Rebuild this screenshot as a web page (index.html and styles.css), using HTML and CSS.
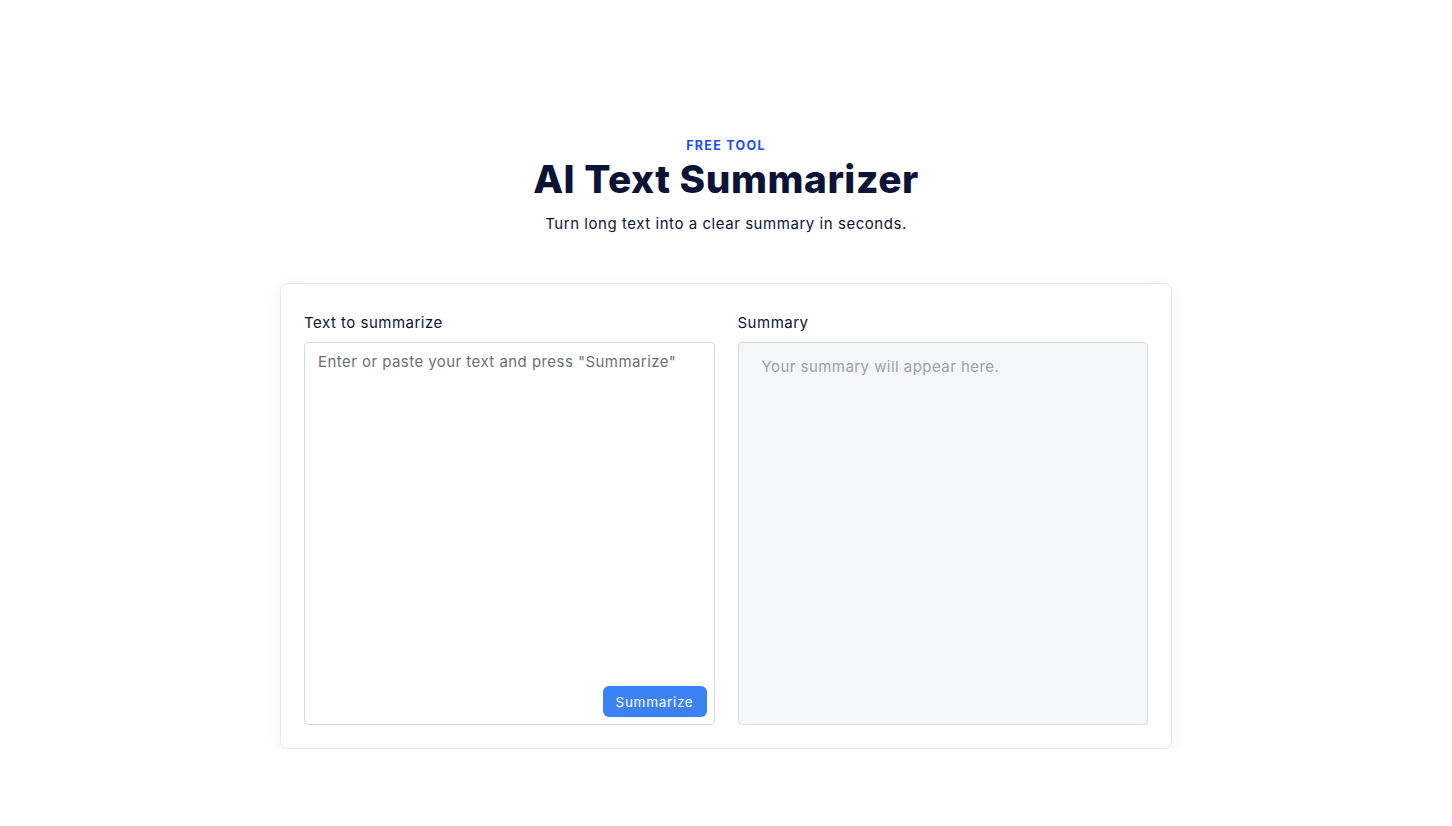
FILE: index.html
```html
<!DOCTYPE html>
<html lang="en">
<head>
<meta charset="utf-8">
<title>AI Text Summarizer</title>
<link rel="stylesheet" href="styles.css">
</head>
<body>
<main class="page">
  <header class="hero">
    <div class="eyebrow">FREE TOOL</div>
    <h1 class="title">AI Text Summarizer</h1>
    <p class="subtitle">Turn long text into a clear summary in seconds.</p>
  </header>
  <section class="card">
    <div class="col">
      <label class="label" for="src">Text to summarize</label>
      <div class="input-wrap">
        <textarea id="src" class="input" placeholder="Enter or paste your text and press &quot;Summarize&quot;"></textarea>
        <button class="btn" type="button">Summarize</button>
      </div>
    </div>
    <div class="col">
      <div class="label">Summary</div>
      <div class="output">Your summary will appear here.</div>
    </div>
  </section>
</main>
</body>
</html>
```
FILE: styles.css
```css
* { box-sizing: border-box; }
html, body { margin: 0; padding: 0; background: #ffffff; }
body {
  font-family: Inter, "Open Sans", "Liberation Sans", sans-serif;
  color: #0b1437;
}
.page {
  display: flex;
  flex-direction: column;
  align-items: center;
  padding-top: 138px;
}
.hero { text-align: center; }
.eyebrow {
  color: #1d4ef5;
  font-size: 12.5px;
  font-weight: 700;
  letter-spacing: 1.3px;
  line-height: 16px;
}
.title {
  margin: 2px 0 0;
  font-size: 38.8px;
  font-weight: 800;
  line-height: 46px;
  letter-spacing: 0.55px;
  color: #0b1437;
}
.subtitle {
  margin: 12px 0 0;
  font-size: 15px;
  line-height: 20px;
  letter-spacing: 0.55px;
  color: #0b1437;
}
.card {
  margin-top: 49px;
  width: 892px;
  height: 466px;
  border: 1px solid #e6e8eb;
  border-radius: 8px;
  box-shadow: 0 4px 18px rgba(15, 23, 42, 0.05);
  padding: 29px 23px 23px;
  display: grid;
  grid-template-columns: 1fr 1fr;
  gap: 23px;
}
.col { display: flex; flex-direction: column; }
.label {
  font-size: 15px;
  line-height: 20px;
  letter-spacing: 0.5px;
  color: #0b1437;
  margin-bottom: 9px;
}
.input-wrap {
  position: relative;
  flex: 1;
  display: flex;
}
.input {
  flex: 1;
  resize: none;
  border: 1.5px solid #d5d9e0;
  border-radius: 4px;
  padding: 8px 13px;
  font-family: inherit;
  font-size: 15px;
  line-height: 22px;
  letter-spacing: 0.45px;
  color: #0b1437;
  background: #fff;
  outline: none;
}
.input::placeholder { color: #6b6f76; }
.btn {
  position: absolute;
  right: 8px;
  bottom: 8px;
  width: 104px;
  height: 31px;
  border: none;
  border-radius: 6px;
  background: #3b82f6;
  color: #fff;
  font-family: inherit;
  font-size: 13.5px;
  letter-spacing: 0.7px;
}
.output {
  flex: 1;
  border: 1.5px solid #d5d9e0;
  border-radius: 4px;
  background: #f5f6f8;
  padding: 13px 23px;
  font-size: 15px;
  line-height: 22px;
  letter-spacing: 0.45px;
  color: #9ca0a7;
}
```
